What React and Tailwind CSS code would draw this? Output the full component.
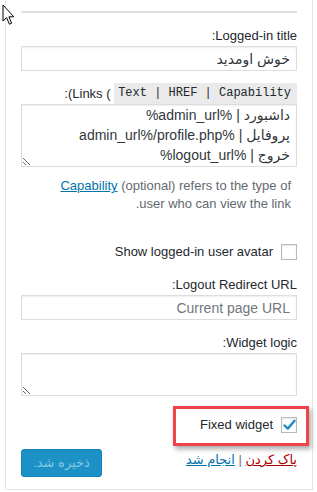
import React from 'react';

const Label = ({ children }) => (
  <div className="text-[13px] leading-[16px] text-[#23282d]">{children}</div>
);

const Box = ({ checked }) => (
  <span className="flex h-[16px] w-[16px] shrink-0 items-center justify-center border border-[#b4b9be] bg-white shadow-[inset_0_1px_2px_rgba(0,0,0,0.1)]">
    {checked && (
      <svg width="13" height="12" viewBox="0 0 13 12">
        <path d="M1.5 6.5 L4.8 9.6 L11.5 1.8" fill="none" stroke="#1e8cbe" strokeWidth="2.4" strokeLinecap="round" strokeLinejoin="round" />
      </svg>
    )}
  </span>
);

const App = () => {
  return (
    <div className="relative h-[492px] w-[317px] overflow-hidden bg-white font-['Liberation_Sans','DejaVu_Sans',sans-serif]">
      <div dir="rtl" className="ml-[5px] h-[490px] w-[308px] border-x border-b border-[#e5e5e5] bg-white px-[15px]">
        <div className="pt-[11px]">
          <div className="h-[2px] bg-[#e1e1e1]" />
        </div>

        <div className="mt-[15px]">
          <Label>Logged-in title:</Label>
          <input
            dir="rtl"
            defaultValue="خوش اومدید"
            className="mt-[2px] block h-[25px] w-full border border-[#ddd] bg-white px-[6px] text-[14px] text-[#32373c] shadow-[inset_0_1px_2px_rgba(0,0,0,0.07)] outline-none"
          />
        </div>

        {/* label drawn in its visual order, as the RTL page shows it */}
        <div dir="ltr" className="mt-[12px] flex h-[21px] justify-end text-[13px] leading-[21px] text-[#23282d]">
          <bdo dir="ltr" className="whitespace-pre">{':(Links ( '}</bdo>
          <code className="bg-[#eaeaea] pl-[4px] pr-[6px] font-['Liberation_Mono',monospace] text-[12px] leading-[21px]">Text | HREF | Capability</code>
        </div>
        <textarea
          dir="rtl"
          rows={3}
          defaultValue={'داشبورد | %admin_url%\nپروفایل | %admin_url%/profile.php\nخروج | %logout_url%'}
          className="block h-[63px] w-full resize-y border border-[#ddd] bg-white px-[6px] pt-0 text-[14px] leading-[20px] text-[#32373c] shadow-[inset_0_1px_2px_rgba(0,0,0,0.07)] outline-none"
        />

        <p className="mt-[10px] pr-[6px] text-[13px] leading-[18px] text-[#646970]">
          <a href="#" className="text-[#0073aa] underline">Capability</a> (optional) refers to the type of
          <br />
          user who can view the link.
        </p>

        <div className="mt-[31px] flex h-[16px] items-center gap-[8px]">
          <Box />
          <span className="text-[13px] text-[#23282d]">Show logged-in user avatar</span>
        </div>

        <div className="mt-[17px]">
          <Label>Logout Redirect URL:</Label>
          <input
            dir="rtl"
            placeholder="Current page URL"
            className="mt-[2px] block h-[25px] w-full border border-[#ddd] bg-white px-[6px] text-[14px] text-[#32373c] shadow-[inset_0_1px_2px_rgba(0,0,0,0.07)] outline-none placeholder:text-[#72777c]"
          />
        </div>

        <div className="mt-[15px]">
          <Label>Widget logic:</Label>
          <textarea
            dir="rtl"
            className="mt-[2px] block h-[43px] w-full resize-y border border-[#ddd] bg-white px-[6px] text-[14px] shadow-[inset_0_1px_2px_rgba(0,0,0,0.07)] outline-none"
          />
        </div>

        <div className="relative mt-[21px] flex h-[16px] items-center gap-[8px]">
          <Box checked />
          <span className="text-[13px] text-[#23282d]">Fixed widget</span>
          <div className="absolute right-[-12px] top-[-11px] h-[40px] w-[136px] border-[3px] border-[#f0424a] shadow-[2px_3px_5px_rgba(0,0,0,0.35)]" />
        </div>

        <div className="mt-[16px] flex items-start justify-between">
          <div className="mt-[2px] text-[13px] leading-[18px] text-[#72777c]">
            <a href="#" className="text-[#a00] underline">پاک کردن</a> | <a href="#" className="text-[#0073aa] underline">انجام شد</a>
          </div>
          <button className="h-[28px] w-[81px] rounded-[3px] border border-[#1583b6] bg-[#1b91c6] text-[13px] text-[#86c9e5]">
            ذخیره شد.
          </button>
        </div>
      </div>

      <svg className="absolute left-[2px] top-[4px]" width="14" height="22" viewBox="0 0 14 22">
        <path d="M1 1 L1 17 L4.6 13.6 L7.4 20.2 L9.6 19.2 L6.9 12.8 L11.8 12.8 Z" fill="#fff" stroke="#000" strokeWidth="1" strokeLinejoin="round" />
      </svg>
    </div>
  );
};

export default App;
